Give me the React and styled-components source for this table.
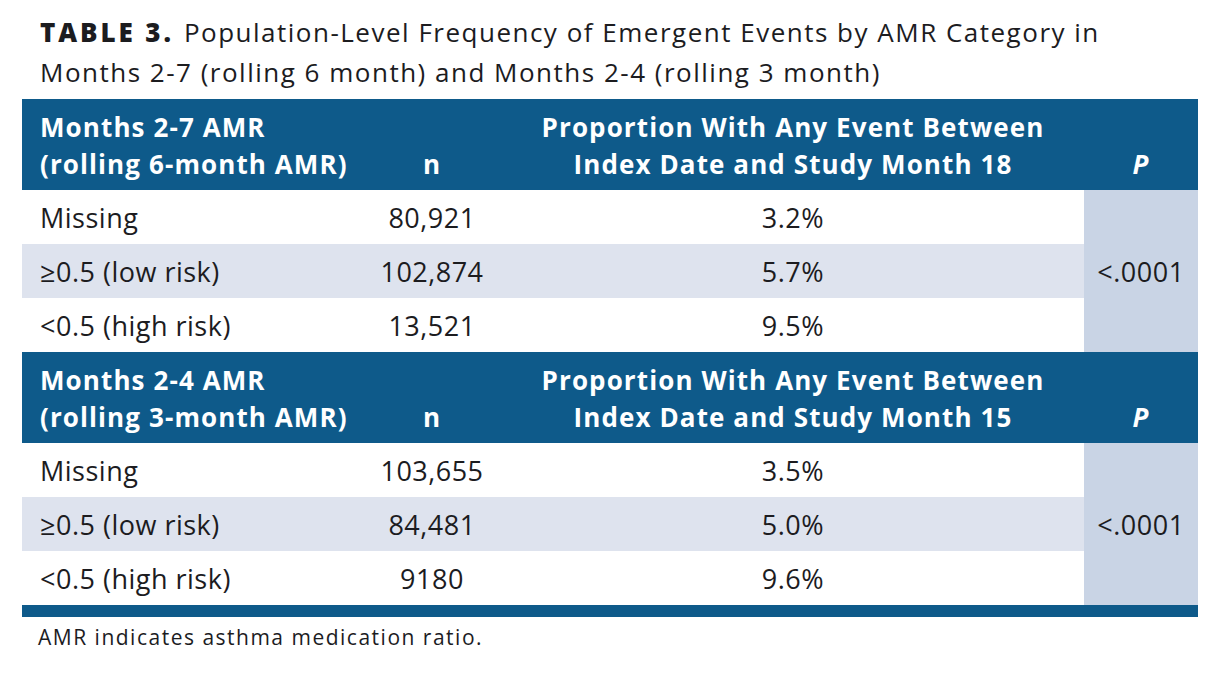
import React from 'react';
import styled, { createGlobalStyle } from 'styled-components';

const Global = createGlobalStyle`
  html, body { margin: 0; padding: 0; background: #ffffff; }
  body {
    font-family: "Open Sans", "Liberation Sans", sans-serif;
    color: #1c1c1f;
  }
`;

const BLUE = '#0e5a8a';

const Page = styled.div`
  width: 1176px;
  padding: 12px 0 0 22px;
`;

const Title = styled.h1`
  margin: 0 0 7px;
  padding-left: 18px;
  font-size: 26px;
  font-weight: 400;
  line-height: 40px;
  letter-spacing: 1.5px;
  color: #1c1c1f;
`;

const TitleLabel = styled.span`
  font-weight: 800;
  letter-spacing: 2.9px;
  margin-right: 10px;
`;

const Table = styled.table`
  width: 1176px;
  border-collapse: collapse;
  border-spacing: 0;
  table-layout: fixed;
`;

const HeadRow = styled.tr`
  background: ${BLUE};
  color: #ffffff;
`;

const HeadCell = styled.th`
  padding: 10px 0 7px ${(p) => (p.$align === 'left' ? '18px' : '0')};
  font-size: 26px;
  font-weight: 700;
  line-height: 37px;
  letter-spacing: 1.1px;
  text-align: ${(p) => p.$align || 'center'};
  vertical-align: bottom;
  font-style: ${(p) => (p.$italic ? 'italic' : 'normal')};
`;

const Row = styled.tr`
  background: ${(p) => (p.$shade ? '#dee3ee' : '#ffffff')};
`;

const Cell = styled.td`
  height: 54px;
  padding: 0 0 0 ${(p) => (p.$align === 'left' ? '18px' : '0')};
  font-size: 27px;
  letter-spacing: 0.5px;
  text-align: ${(p) => p.$align || 'center'};
  vertical-align: middle;
  white-space: nowrap;
`;

const PCell = styled(Cell)`
  background: #c9d4e5;
`;

const BottomRule = styled.div`
  height: 12px;
  background: ${BLUE};
`;

const Footnote = styled.p`
  margin: 6px 0 0;
  padding-left: 16px;
  font-size: 21px;
  line-height: 28px;
  letter-spacing: 1.5px;
  color: #1c1c1f;
`;

const sections = [
  {
    label: ['Months 2-7 AMR', '(rolling 6-month AMR)'],
    month: 18,
    p: '<.0001',
    rows: [
      ['Missing', '80,921', '3.2%'],
      ['≥0.5 (low risk)', '102,874', '5.7%'],
      ['<0.5 (high risk)', '13,521', '9.5%'],
    ],
  },
  {
    label: ['Months 2-4 AMR', '(rolling 3-month AMR)'],
    month: 15,
    p: '<.0001',
    rows: [
      ['Missing', '103,655', '3.5%'],
      ['≥0.5 (low risk)', '84,481', '5.0%'],
      ['<0.5 (high risk)', '9180', '9.6%'],
    ],
  },
];

export default function App() {
  return (
    <>
      <Global />
      <Page>
        <Title>
          <TitleLabel>TABLE 3.</TitleLabel>Population-Level Frequency of Emergent Events by AMR Category in
          <br />
          Months 2-7 (rolling 6 month) and Months 2-4 (rolling 3 month)
        </Title>
        <Table>
          <colgroup>
            <col style={{ width: 340 }} />
            <col style={{ width: 140 }} />
            <col style={{ width: 582 }} />
            <col style={{ width: 114 }} />
          </colgroup>
          {sections.map((s) => (
            <tbody key={s.month}>
              <HeadRow>
                <HeadCell $align="left">
                  {s.label[0]}
                  <br />
                  {s.label[1]}
                </HeadCell>
                <HeadCell>n</HeadCell>
                <HeadCell>
                  Proportion With Any Event Between
                  <br />
                  Index Date and Study Month {s.month}
                </HeadCell>
                <HeadCell $italic>P</HeadCell>
              </HeadRow>
              {s.rows.map((r, i) => (
                <Row key={r[0]} $shade={i === 1}>
                  <Cell $align="left">{r[0]}</Cell>
                  <Cell>{r[1]}</Cell>
                  <Cell>{r[2]}</Cell>
                  {i === 0 && <PCell rowSpan={3}>{s.p}</PCell>}
                </Row>
              ))}
            </tbody>
          ))}
        </Table>
        <BottomRule />
        <Footnote>AMR indicates asthma medication ratio.</Footnote>
      </Page>
    </>
  );
}
